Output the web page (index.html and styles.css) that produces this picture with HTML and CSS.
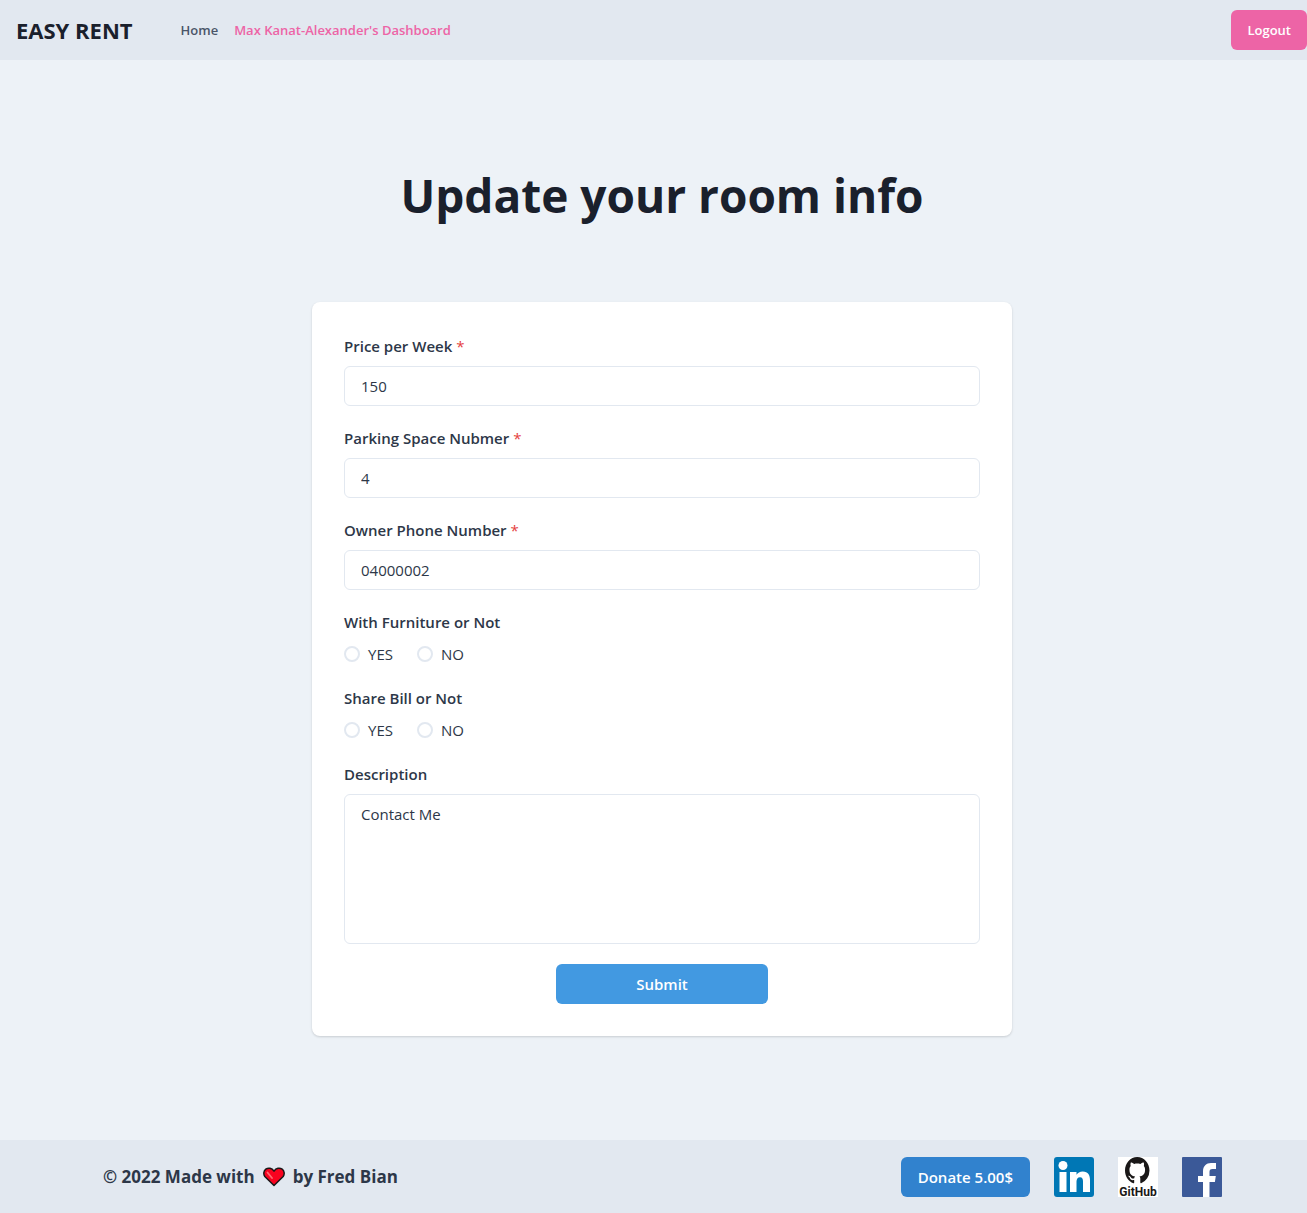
FILE: index.html
```html
<!DOCTYPE html>
<html lang="en">
<head>
<meta charset="utf-8">
<meta name="viewport" content="width=device-width, initial-scale=1">
<title>Easy Rent</title>
<link rel="stylesheet" href="styles.css">
</head>
<body>
<header class="header">
  <a class="brand" href="#">EASY RENT</a>
  <nav class="nav">
    <a class="nav-link" href="#">Home</a>
    <a class="nav-link nav-link-active" href="#">Max Kanat-Alexander's Dashboard</a>
  </nav>
  <button class="button button-pink" type="button">Logout</button>
</header>

<main class="main">
  <h1 class="title">Update your room info</h1>
  <form class="card">
    <div class="field">
      <label class="label" for="price">Price per Week <span class="required">*</span></label>
      <input class="input" id="price" type="text" value="150">
    </div>
    <div class="field">
      <label class="label" for="parking">Parking Space Nubmer <span class="required">*</span></label>
      <input class="input" id="parking" type="text" value="4">
    </div>
    <div class="field">
      <label class="label" for="phone">Owner Phone Number <span class="required">*</span></label>
      <input class="input" id="phone" type="text" value="04000002">
    </div>
    <div class="field" role="radiogroup" aria-labelledby="furniture">
      <span class="label" id="furniture">With Furniture or Not</span>
      <div class="choices">
        <label class="choice"><input class="radio" type="radio" name="furniture">YES</label>
        <label class="choice"><input class="radio" type="radio" name="furniture">NO</label>
      </div>
    </div>
    <div class="field" role="radiogroup" aria-labelledby="bill">
      <span class="label" id="bill">Share Bill or Not</span>
      <div class="choices">
        <label class="choice"><input class="radio" type="radio" name="bill">YES</label>
        <label class="choice"><input class="radio" type="radio" name="bill">NO</label>
      </div>
    </div>
    <div class="field">
      <label class="label" for="description">Description</label>
      <textarea class="input textarea" id="description">Contact Me</textarea>
    </div>
    <button class="button submit" type="submit">Submit</button>
  </form>
</main>

<footer class="footer">
  <p class="credit">
    <span>© 2022 Made with</span>
    <svg class="heart" viewBox="0 0 22 20" aria-hidden="true">
      <path d="M11 18.5 1.8 9.5C.2 7.4.6 3.8 2.8 2.2 5.3.4 8.8 1 11 4.2 13.200 1 16.700.4 19.200 2.200 21.400 3.800 21.800 7.400 20.200 9.500Z" fill="#f8031f" stroke="#1b1718" stroke-width="1.500" stroke-linejoin="round"/>
      <path d="M4.500 5.500 9 11" stroke="#ff6a72" stroke-width="1.800" stroke-linecap="round"/>
    </svg>
    <span>by Fred Bian</span>
  </p>
  <div class="links">
    <button class="button button-blue" type="button">Donate 5.00$</button>
    <a class="social" href="#" aria-label="LinkedIn">
      <svg viewBox="0 0 40 40">
        <rect width="40" height="40" rx="3" fill="#0077b5"/>
        <circle cx="9" cy="8.500" r="4.500" fill="#fff"/>
        <path d="M5.500 15h7v20h-7zM16 15h6.500v2.800c1.200-2 3.300-3.300 6.200-3.300 5.600 0 7.300 3.600 7.300 8.600V35h-7V24.600c0-2.600-.6-4.400-3-4.400s-3.500 1.900-3.500 4.400V35H16z" fill="#fff"/>
      </svg>
    </a>
    <a class="social" href="#" aria-label="GitHub">
      <svg class="social-icon" viewBox="0 0 40 40">
        <rect width="40" height="40" fill="#fff"/>
        <g transform="translate(7) scale(1.530 1.680)">
          <path fill="#191717" d="M8 0C3.580 0 0 3.580 0 8c0 3.540 2.290 6.530 5.470 7.590.4.070.55-.17.55-.38 0-.19-.01-.82-.01-1.490-2.010.37-2.530-.49-2.690-.94-.09-.23-.48-.94-.82-1.130-.28-.15-.68-.52-.01-.53.63-.01 1.080.58 1.230.82.72 1.210 1.870.87 2.330.66.07-.52.28-.87.51-1.070-1.780-.2-3.640-.89-3.640-3.950 0-.87.31-1.590.82-2.150-.08-.2-.36-1.020.08-2.120 0 0 .67-.21 2.200.82.640-.18 1.320-.27 2-.27s1.360.09 2 .27c1.530-1.040 2.200-.82 2.200-.82.440 1.100.160 1.920.080 2.120.510.560.820 1.270.820 2.150 0 3.070-1.870 3.750-3.650 3.950.290.250.540.730.540 1.480 0 1.070-.01 1.930-.01 2.200 0 .210.150.460.550.380A8.010 8.010 0 0 0 16 8c0-4.420-3.580-8-8-8z"/>
        </g>
        <text class="social-text" x="20" y="39" text-anchor="middle">GitHub</text>
      </svg>
    </a>
    <a class="social" href="#" aria-label="Facebook">
      <svg viewBox="0 0 40 40">
        <rect width="40" height="40" rx="1" fill="#3b5998"/>
        <path d="M21 40V25h-5v-6h5v-4.500C21 9 24.300 6 29 6h5v6h-3.500c-2.400 0-3 1.200-3 3V19h6.300l-.9 6h-5.400v15z" fill="#fff"/>
      </svg>
    </a>
  </div>
</footer>
</body>
</html>
```
FILE: styles.css
```css
* {
  box-sizing: border-box;
}

body {
  display: flex;
  flex-direction: column;
  min-height: 100vh;
  margin: 0;
  background: #edf2f7;
  color: #2d3748;
  font-family: "Open Sans", "Noto Sans", sans-serif;
  font-size: 15px;
  line-height: 24px;
}

a {
  text-decoration: none;
}

svg {
  display: block;
}

.header {
  display: flex;
  align-items: center;
  height: 60px;
  padding-left: 16px;
  background: #e2e8f0;
}

.brand {
  margin-right: 48px;
  color: #1a202c;
  font-size: 22px;
  font-weight: 700;
}

.nav {
  display: flex;
  flex: 1;
  gap: 16px;
}

.nav-link {
  color: #4a5568;
  font-size: 13px;
  font-weight: 600;
}

.nav-link-active {
  color: #ed64a6;
}

.button {
  height: 40px;
  padding: 0 16px;
  border: 0;
  border-radius: 6px;
  color: #fff;
  font: inherit;
  font-weight: 600;
  cursor: pointer;
}

.button-pink {
  background: #ed64a6;
  font-size: 13px;
}

.button-blue {
  padding: 0 17px;
  background: #3182ce;
}

.main {
  display: flex;
  flex: 1;
  flex-direction: column;
  align-items: center;
  gap: 76px;
  padding: 104px 0 104px 17px;
}

.title {
  margin: 0;
  color: #1a202c;
  font-size: 46px;
  font-weight: 700;
  line-height: 62px;
}

.card {
  display: flex;
  flex-direction: column;
  gap: 20px;
  width: 100%;
  max-width: 700px;
  padding: 32px;
  border-radius: 8px;
  background: #fff;
  box-shadow: 0 1px 3px rgba(0, 0, 0, 0.1), 0 1px 2px rgba(0, 0, 0, 0.06);
}

.field {
  display: flex;
  flex-direction: column;
  gap: 8px;
}

.label {
  font-weight: 600;
}

.required {
  color: #e53e3e;
  font-weight: 400;
}

.input {
  width: 100%;
  height: 40px;
  padding: 0 16px;
  border: 1px solid #e2e8f0;
  border-radius: 6px;
  background: #fff;
  color: inherit;
  font: inherit;
}

.textarea {
  display: block;
  height: 150px;
  padding: 7px 16px;
  resize: none;
}

.choices {
  display: flex;
  gap: 24px;
}

.choice {
  display: flex;
  align-items: center;
  gap: 8px;
}

.radio {
  width: 16px;
  height: 16px;
  margin: 0;
  border: 2px solid #e2e8f0;
  border-radius: 50%;
  appearance: none;
}

.radio:checked {
  border: 5px solid #3182ce;
}

.submit {
  align-self: center;
  width: 212px;
  background: #4299e1;
}

.footer {
  display: flex;
  align-items: center;
  justify-content: space-between;
  padding: 17px 85px 16px 103px;
  background: #e2e8f0;
}

.credit {
  display: flex;
  align-items: center;
  gap: 8px;
  margin: 0;
  font-size: 17px;
  font-weight: 700;
}

.heart {
  width: 22px;
  height: 20px;
}

.links {
  display: flex;
  gap: 24px;
}

.social {
  width: 40px;
  height: 40px;
}

.social-icon {
  overflow: visible;
}

.social-text {
  fill: #191717;
  font-family: Roboto, sans-serif;
  font-size: 12px;
  font-weight: 700;
}
```
